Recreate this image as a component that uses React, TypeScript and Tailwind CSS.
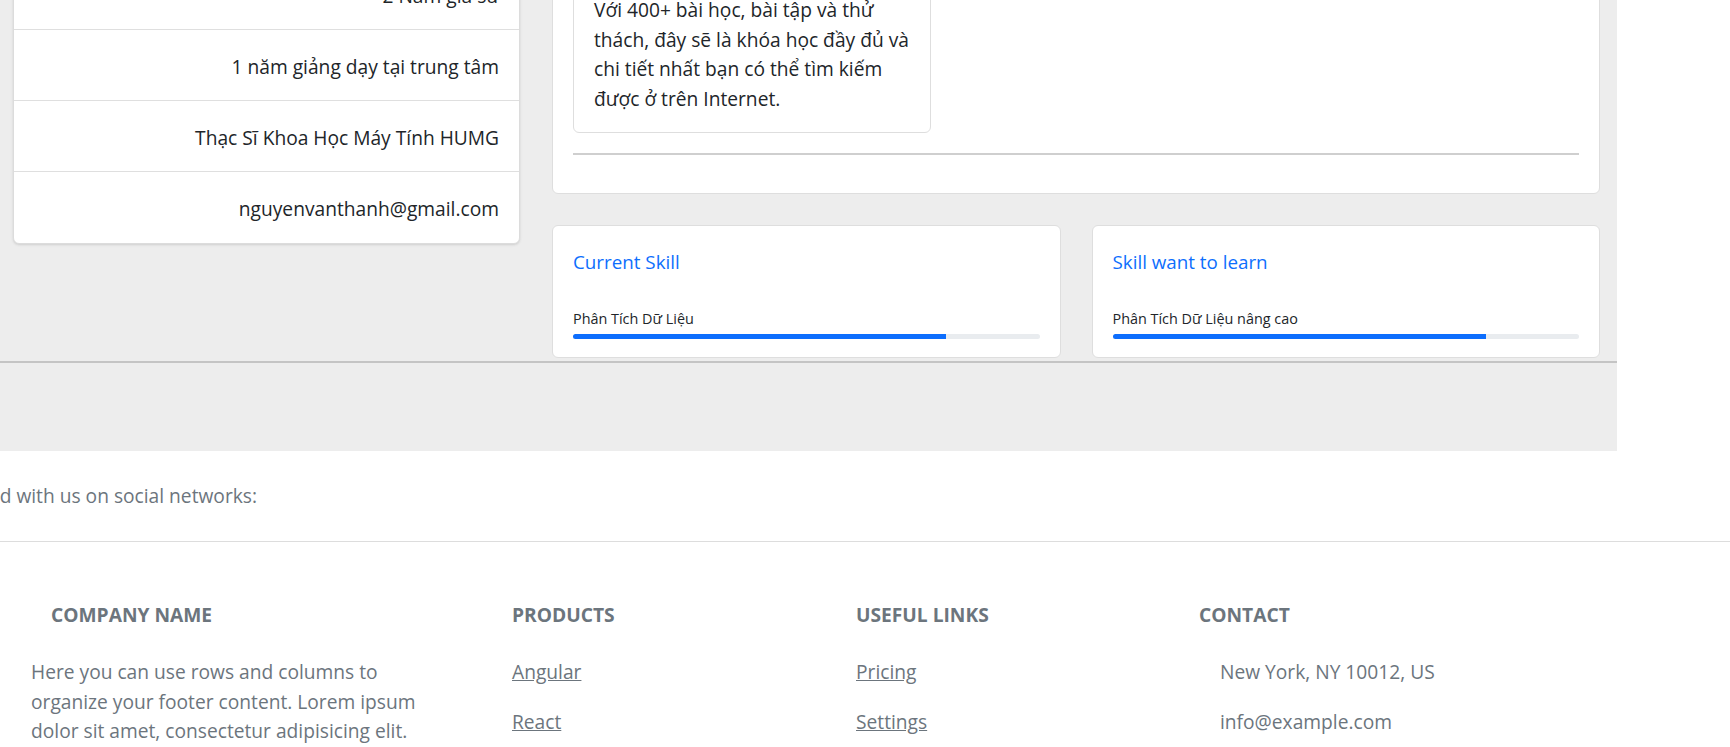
import React from 'react';

const infoRows = [
  '2 Năm gia sư',
  '1 năm giảng dạy tại trung tâm',
  'Thạc Sĩ Khoa Học Máy Tính HUMG',
  'nguyenvanthanh@gmail.com',
];

const skills = [
  { title: 'Current Skill', label: 'Phân Tích Dữ Liệu', value: 80 },
  { title: 'Skill want to learn', label: 'Phân Tích Dữ Liệu nâng cao', value: 80 },
];

const SkillCard: React.FC<{ title: string; label: string; value: number }> = ({ title, label, value }) => (
  <div className="flex-1 h-[133px] bg-white border border-[#dedede] rounded-md px-[20px] pt-[23px]">
    <div className="text-[18.8px] leading-[26px] text-[#0d6efd]">{title}</div>
    <div className="mt-[34px] text-[14.4px] leading-[20px] text-[#212529]">{label}</div>
    <div className="mt-[5px] h-[5px] rounded-full bg-[#e9ecef] overflow-hidden">
      <div className="h-full bg-[#0d6efd]" style={{ width: `${value}%` }} />
    </div>
  </div>
);

export default function App() {
  return (
    <div className="w-[1730px] h-[747px] overflow-hidden bg-white font-['Open_Sans','Noto_Sans',sans-serif] text-[19.2px]">
      {/* profile area, scrolled so the top is cut */}
      <div className="w-[1617px] bg-[#ededed] -mt-[60px]">
        <div className="flex gap-[32px] pl-[13px] pb-[3px]">
          <div className="w-[507px] pt-[18px]">
            <div className="bg-white border border-[#dcdcdc] rounded-md shadow-sm">
              {infoRows.map((row, i) => (
                <div
                  key={row}
                  className={`h-[71px] pt-[4px] flex items-center justify-end pr-[20px] text-[#212529] ${i < infoRows.length - 1 ? 'border-b border-[#dfdfdf]' : ''}`}
                >
                  {row}
                </div>
              ))}
            </div>
          </div>

          <div className="w-[1048px]">
            <div className="bg-white border border-[#dedede] rounded-md px-[20px] pt-[20px] pb-[38px]">
              <div className="w-[358px] border border-[#dedede] rounded-md px-[20px] pt-[33px] pb-[19px] text-[#212529] leading-[29.5px]">
                Với 400+ bài học, bài tập và thử<br />
                thách, đây sẽ là khóa học đầy đủ và<br />
                chi tiết nhất bạn có thể tìm kiếm<br />
                được ở trên Internet.
              </div>
              <hr className="mt-[20px] border-t-2 border-[#cfcfcf]" />
            </div>

            <div className="flex gap-[31px] mt-[31px]">
              {skills.map((s) => (
                <SkillCard key={s.title} {...s} />
              ))}
            </div>
          </div>
        </div>
        <div className="h-[90px] border-t-2 border-[#c4c4c4]" />
      </div>

      {/* footer */}
      <footer className="text-[#6c757d]">
        <div className="h-[91px] flex items-center border-b border-[#dddddd]">
          <div className="w-[257px] flex justify-end overflow-hidden whitespace-nowrap">
            <span>Get connected with us on social networks:</span>
          </div>
        </div>

        <div className="flex pt-[60px]">
          <div className="w-[512px] pl-[31px]">
            <h6 className="pl-[20px] font-bold uppercase leading-[26px]">Company name</h6>
            <p className="mt-[29px] w-[400px] leading-[29.5px]">
              Here you can use rows and columns to organize your footer content. Lorem ipsum dolor sit amet, consectetur adipisicing elit.
            </p>
          </div>
          <div className="w-[344px]">
            <h6 className="font-bold uppercase leading-[26px]">Products</h6>
            <ul className="mt-[29px] flex flex-col gap-[20.5px] leading-[29.5px]">
              <li><a href="#" className="underline">Angular</a></li>
              <li><a href="#" className="underline">React</a></li>
            </ul>
          </div>
          <div className="w-[343px]">
            <h6 className="font-bold uppercase leading-[26px]">Useful links</h6>
            <ul className="mt-[29px] flex flex-col gap-[20.5px] leading-[29.5px]">
              <li><a href="#" className="underline">Pricing</a></li>
              <li><a href="#" className="underline">Settings</a></li>
            </ul>
          </div>
          <div>
            <h6 className="font-bold uppercase leading-[26px]">Contact</h6>
            <ul className="mt-[29px] pl-[21px] flex flex-col gap-[20.5px] leading-[29.5px]">
              <li>New York, NY 10012, US</li>
              <li>info@example.com</li>
            </ul>
          </div>
        </div>
      </footer>
    </div>
  );
}
